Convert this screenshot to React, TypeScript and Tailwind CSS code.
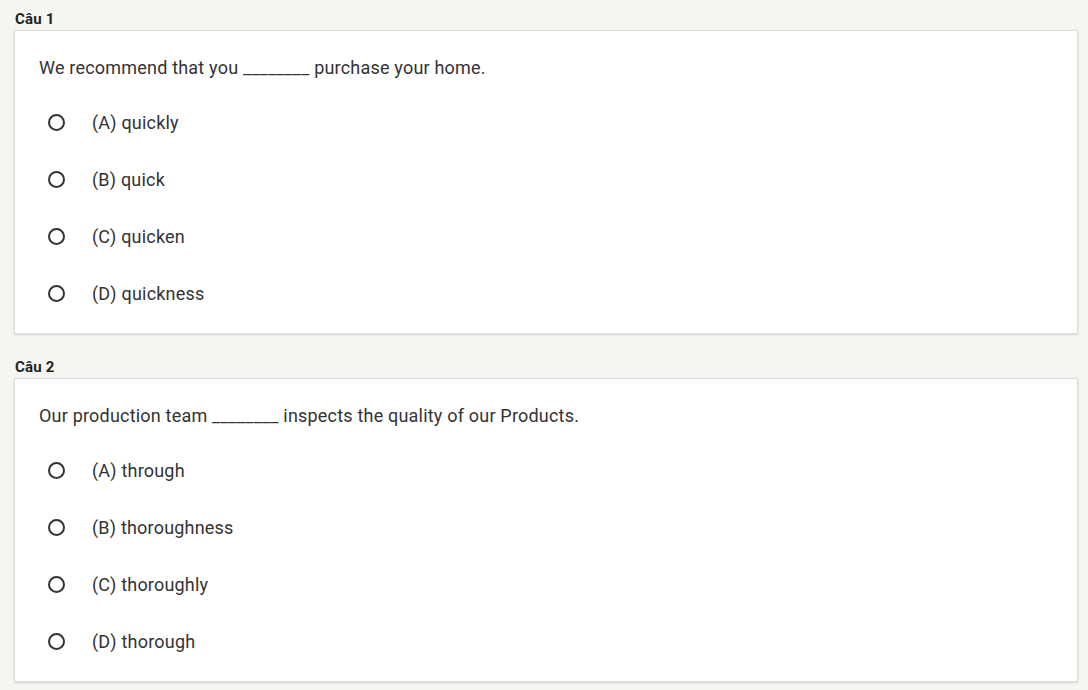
import React from "react";

interface Question {
  id: number;
  text: [string, string];
  options: string[];
}

const questions: Question[] = [
  {
    id: 1,
    text: ["We recommend that you ", " purchase your home."],
    options: ["(A) quickly", "(B) quick", "(C) quicken", "(D) quickness"],
  },
  {
    id: 2,
    text: ["Our production team ", " inspects the quality of our Products."],
    options: ["(A) through", "(B) thoroughness", "(C) thoroughly", "(D) thorough"],
  },
];

function QuestionCard({ q }: { q: Question }) {
  return (
    <section>
      <h2 className="h-[18px] pl-[15px] text-[15px] font-bold leading-[18px] tracking-[0.2px] text-[#222]">Câu {q.id}</h2>
      <div className="mt-[2px] ml-[14px] w-[1064px] border border-[#dcdcdc] bg-white px-[24px] pt-[25px] pb-[11px] shadow-[0_1px_2px_rgba(0,0,0,0.12)]">
        <p className="h-[24px] text-[18px] leading-[24px] tracking-[0.2px] text-[#333]">
          {q.text[0]}________{q.text[1]}
        </p>
        <ul className="mt-[14px] flex flex-col">
          {q.options.map((opt) => (
            <li key={opt} className="flex h-[57px] items-center">
              <span className="ml-[9px] h-[17px] w-[17px] rounded-full border-2 border-[#333]" />
              <span className="ml-[27px] text-[18px] tracking-[0.2px] text-[#333]">{opt}</span>
            </li>
          ))}
        </ul>
      </div>
    </section>
  );
}

export default function App() {
  return (
    <div className="min-h-[690px] bg-[#f5f5f2] pt-[10px] font-['Roboto',sans-serif]">
      <div className="flex flex-col gap-[24px]">
        {questions.map((q) => (
          <QuestionCard key={q.id} q={q} />
        ))}
      </div>
    </div>
  );
}
